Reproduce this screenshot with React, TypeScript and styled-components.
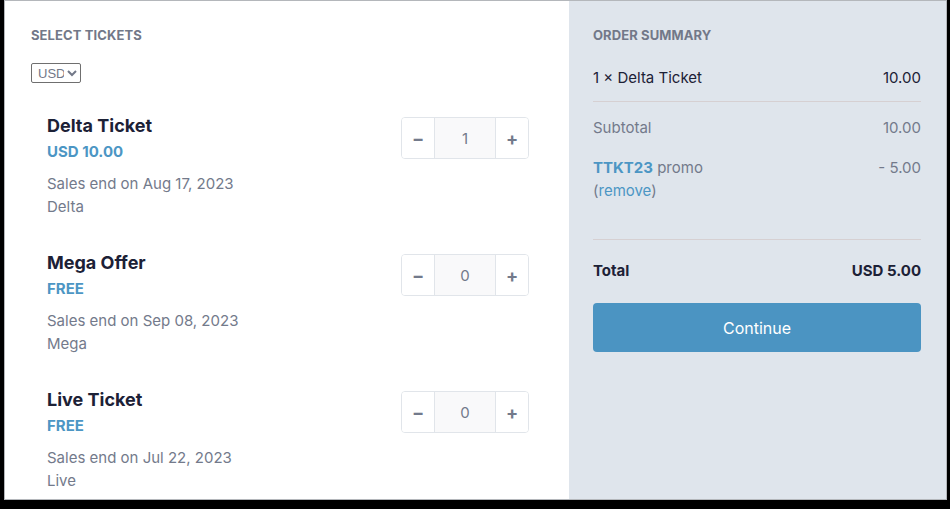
import React from "react";
import styled, { createGlobalStyle } from "styled-components";

const Global = createGlobalStyle`
  html, body { margin: 0; padding: 0; background: #000; }
  body { font-family: Inter, "Noto Sans", sans-serif; }
  * { box-sizing: border-box; }
`;

const Frame = styled.div`
  width: 950px;
  height: 509px;
  padding: 0 3px 9px 4px;
  background: #000;
`;

const Card = styled.div`
  width: 943px;
  height: 500px;
  border: 1px solid #b4b7bb;
  display: grid;
  grid-template-columns: 564px 1fr;
  background: #fff;
  overflow: hidden;
`;

const Left = styled.section`
  background: #fff;
  padding: 26px 40px 0 26px;
`;

const Right = styled.aside`
  background: #dfe5ec;
  padding: 26px 25px 0 24px;
  display: flex;
  flex-direction: column;
`;

const Heading = styled.h2`
  margin: 0;
  font-size: 13px;
  line-height: 16px;
  font-weight: 700;
  letter-spacing: 0.1px;
  text-transform: uppercase;
  color: #727888;
`;

const CurrencySelect = styled.select`
  display: block;
  margin-top: 20px;
  width: 50px;
  height: 20px;
  font-family: "Liberation Sans", Arial, sans-serif;
  font-size: 13px;
  color: #727888;
  border: 1px solid #6f6f6f;
  border-radius: 2px;
  background: #fff;
  padding: 0 0 0 2px;
`;

const TicketList = styled.div`
  margin-top: 31px;
  padding-left: 16px;
  display: flex;
  flex-direction: column;
  gap: 33px;
`;

const Ticket = styled.div`
  display: flex;
  justify-content: space-between;
  align-items: flex-start;
`;

const TicketInfo = styled.div`
  display: flex;
  flex-direction: column;
`;

const TicketName = styled.div`
  font-size: 18px;
  line-height: 24px;
  font-weight: 700;
  color: #1c2136;
  margin-bottom: 4px;
`;

const Price = styled.div`
  font-size: 15px;
  line-height: 20px;
  font-weight: 700;
  color: #4c96c4;
  margin-bottom: 10px;
`;

const Meta = styled.div`
  font-size: 15px;
  line-height: 23px;
  color: #737a8b;
`;

const Stepper = styled.div`
  margin-top: 3px;
  display: grid;
  grid-template-columns: 32px 62px 32px;
  height: 42px;
  border: 1px solid #e1e5ea;
  border-radius: 4px;
  overflow: hidden;
`;

const StepButton = styled.button`
  border: none;
  background: #fff;
  color: #737a8b;
  font-family: Inter, sans-serif;
  font-size: 18px;
  font-weight: 700;
  display: flex;
  align-items: center;
  justify-content: center;
  padding: 0;
`;

const StepValue = styled.div`
  background: #f9f9fa;
  border-left: 1px solid #e1e5ea;
  border-right: 1px solid #e1e5ea;
  display: flex;
  align-items: center;
  justify-content: center;
  font-size: 15px;
  color: #737a8b;
`;

const Row = styled.div<{ $bold?: boolean; $muted?: boolean }>`
  display: flex;
  justify-content: space-between;
  align-items: flex-start;
  font-size: 15px;
  line-height: 22px;
  font-weight: ${(p) => (p.$bold ? 700 : 400)};
  color: ${(p) => (p.$muted ? "#737a8b" : "#1c2136")};
`;

const ItemRow = styled(Row)`
  margin-top: 24px;
  padding-bottom: 12px;
  border-bottom: 1px solid #d6d0d2;
`;

const SubtotalRow = styled(Row)`
  margin-top: 15px;
`;

const PromoRow = styled(Row)`
  margin-top: 17px;
  line-height: 23px;
  padding-bottom: 37px;
  border-bottom: 1px solid #d6d0d2;
`;

const PromoCode = styled.span`
  color: #4c96c4;
  font-weight: 700;
`;

const RemoveLink = styled.a`
  color: #4c96c4;
  text-decoration: none;
  cursor: pointer;
`;

const TotalRow = styled(Row)`
  margin-top: 20px;
`;

const ContinueButton = styled.button`
  margin-top: 21px;
  height: 49px;
  width: 100%;
  border: none;
  border-radius: 4px;
  background: #4b94c2;
  color: #fff;
  font-family: Inter, sans-serif;
  font-size: 16px;
`;

const tickets = [
  { name: "Delta Ticket", price: "USD 10.00", ends: "Aug 17, 2023", desc: "Delta", qty: 1 },
  { name: "Mega Offer", price: "FREE", ends: "Sep 08, 2023", desc: "Mega", qty: 0 },
  { name: "Live Ticket", price: "FREE", ends: "Jul 22, 2023", desc: "Live", qty: 0 },
];

export default function App() {
  return (
    <>
      <Global />
      <Frame>
        <Card>
          <Left>
            <Heading>Select Tickets</Heading>
            <CurrencySelect defaultValue="USD">
              <option value="USD">USD</option>
            </CurrencySelect>
            <TicketList>
              {tickets.map((t) => (
                <Ticket key={t.name}>
                  <TicketInfo>
                    <TicketName>{t.name}</TicketName>
                    <Price>{t.price}</Price>
                    <Meta>Sales end on {t.ends}</Meta>
                    <Meta>{t.desc}</Meta>
                  </TicketInfo>
                  <Stepper>
                    <StepButton>−</StepButton>
                    <StepValue>{t.qty}</StepValue>
                    <StepButton>+</StepButton>
                  </Stepper>
                </Ticket>
              ))}
            </TicketList>
          </Left>
          <Right>
            <Heading>Order Summary</Heading>
            <ItemRow>
              <span>1 × Delta Ticket</span>
              <span>10.00</span>
            </ItemRow>
            <SubtotalRow $muted>
              <span>Subtotal</span>
              <span>10.00</span>
            </SubtotalRow>
            <PromoRow $muted>
              <span>
                <PromoCode>TTKT23</PromoCode> promo
                <br />(<RemoveLink>remove</RemoveLink>)
              </span>
              <span>- 5.00</span>
            </PromoRow>
            <TotalRow $bold>
              <span>Total</span>
              <span>USD 5.00</span>
            </TotalRow>
            <ContinueButton>Continue</ContinueButton>
          </Right>
        </Card>
      </Frame>
    </>
  );
}
